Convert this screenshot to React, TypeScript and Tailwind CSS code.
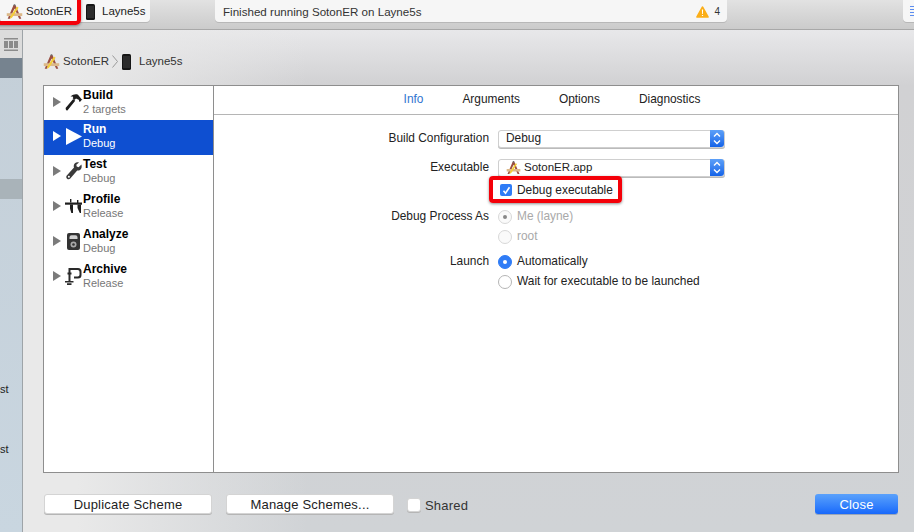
import type { ReactNode } from 'react';

// ─── Icons ─────────────────────────────────────────
function AppIcon({ size = 17 }: Readonly<{ size?: number }>) {
  return (
    <svg width={size} height={size} viewBox="0 0 18 18" className="shrink-0">
      <path d="M1.800 16.800 8 2h2l6.200 14.800h-2.300L9 5.800 4.100 16.800z" fill="#9a4f42" />
      <path d="M.8 10.800h16.400v3H.8z" fill="#dcb98a" />
      <path d="M4.600 14.400 11.600 3.800l1.700 1.100-7 10.600-2.100 1.200z" fill="#f4cd38" />
      <path d="M8.300 1.200h1.400l.5 1.700H7.900z" fill="#6b6b6b" />
    </svg>
  );
}

function PhoneIcon() {
  return (
    <svg width="9" height="16" viewBox="0 0 9 16" className="shrink-0">
      <rect x="0" y="0" width="9" height="16" rx="1.600" fill="#161616" />
      <rect x="1" y="2" width="7" height="12" fill="#2c2c2c" />
    </svg>
  );
}

function HammerIcon() {
  return (
    <svg width="18" height="18" viewBox="0 0 18 18">
      <path d="M.6 14.900 8.200 5.900l2 1.800L2.800 16.900a1.200 1.200 0 0 1-1.800.1z" fill="#1d1d1d" />
      <path d="M5.500 3.600C8 1.300 11 .9 13 1.800l3.600 4.400.9-.3-2.600 3-1-.9.2-1.100L11 5.400 9.600 7 7.700 5.300l.6-1.200C7.600 3.600 6.600 3.500 5.500 3.600z" fill="#1d1d1d" />
    </svg>
  );
}

function PlayIcon() {
  return (
    <svg width="16" height="17" viewBox="0 0 16 17">
      <path d="M0 0 16 8.500 0 17z" fill="#fff" />
    </svg>
  );
}

function WrenchIcon() {
  return (
    <svg width="16" height="18" viewBox="0 0 16 18">
      <path d="M15.400 2.600 12.600 5.200 10.700 4.600 10.300 2.700 13 .4C10.400-.5 7.800 1.200 7.700 4c0 .7.100 1.100.3 1.600L1 13.300c-1.100 1.200-.9 2.700.1 3.500 1 .8 2.300.7 3.200-.3l6.900-8.100c.6.100 1.100.1 1.700 0 2.300-.6 3.300-3.100 2.500-5.800z" fill="#3a3a3a" />
      <circle cx="2.900" cy="14.800" r="1" fill="#fff" />
    </svg>
  );
}

function CaliperIcon() {
  return (
    <svg width="17" height="14" viewBox="0 0 17 14">
      <path d="M0 3.500h17v2.200H0z" fill="#1e1e1e" />
      <path d="M5 0h1.400v3.600H5zM12 1h1.400v3H12z" fill="#1e1e1e" />
      <path d="M5 5.500h3V14H6.300L5 9.500zM12.500 5.500h3.500L16 14h-1.200l-2.300-5z" fill="#1e1e1e" />
    </svg>
  );
}

function AnalyzeIcon() {
  return (
    <svg width="13" height="17" viewBox="0 0 13 17">
      <rect x="0" y="0" width="13" height="17" rx="2" fill="#333" />
      <path d="M2.500 6V4.200a2 2 0 0 1 2-2h4a2 2 0 0 1 2 2V6z" fill="#cfcfcf" />
      <circle cx="6.500" cy="11.500" r="3" fill="#a8a8a8" />
      <circle cx="6.500" cy="11.500" r="1.300" fill="#333" />
    </svg>
  );
}

function ClampIcon() {
  return (
    <svg width="17" height="18" viewBox="0 0 17 18">
      <path d="M3.500 1h9.500A3.500 3.500 0 0 1 16.500 4.500v3.500a3.500 3.500 0 0 1-3.500 3.500H9v-2h3.700A1.800 1.800 0 0 0 14.500 7.700V4.800A1.800 1.800 0 0 0 12.700 3H5.500v3h-2z" fill="#2a2a2a" />
      <path d="M2.500 5.500h4v2h-1v7h-2v-7h-1zM0 14h8.500v1.600H0zM2 16.200h4.500V18H2z" fill="#2a2a2a" />
    </svg>
  );
}

function WarningIcon() {
  return (
    <svg width="13" height="12" viewBox="0 0 13 12">
      <path d="M6.500.3c.4 0 .7.200.9.600l5.300 9.500c.3.600-.1 1.300-.8 1.300H1.100c-.7 0-1.100-.7-.8-1.300L5.600.9c.2-.4.500-.6.900-.6z" fill="#fbae17" />
      <path d="M5.900 3.500h1.200l-.2 4.500h-.8zM5.900 8.900h1.200v1.200H5.900z" fill="#fff" />
    </svg>
  );
}

function Disclosure({ active = false }: Readonly<{ active?: boolean }>) {
  return (
    <svg width="8" height="10" viewBox="0 0 8 10" className="shrink-0">
      <path d="M0 0 8 5 0 10z" fill={active ? '#fff' : '#7b7b7b'} />
    </svg>
  );
}

function Stepper() {
  return (
    <span className="flex h-[17px] w-[14px] shrink-0 items-center justify-center rounded-r-[3px] bg-gradient-to-b from-[#5da0f8] to-[#1463e8]">
      <svg width="8" height="13" viewBox="0 0 8 13" fill="none" stroke="#fff" strokeWidth="1.400">
        <path d="M1 4.500 4 1.500l3 3M1 8.500l3 3 3-3" />
      </svg>
    </span>
  );
}

// ─── Scheme list ───────────────────────────────────
const actions = [
  { name: 'Build', sub: '2 targets', icon: <HammerIcon />, rowClass: 'h-[34px] pb-[2px]' },
  { name: 'Run', sub: 'Debug', icon: <PlayIcon />, rowClass: 'h-[35px] pb-[3px]', active: true },
  { name: 'Test', sub: 'Debug', icon: <WrenchIcon />, rowClass: 'h-[35px] pb-[3px]' },
  { name: 'Profile', sub: 'Release', icon: <CaliperIcon />, rowClass: 'h-[35px] pb-[3px]' },
  { name: 'Analyze', sub: 'Debug', icon: <AnalyzeIcon />, rowClass: 'h-[35px] pb-[3px]' },
  { name: 'Archive', sub: 'Release', icon: <ClampIcon />, rowClass: 'h-[35px] pb-[3px]' },
];

function ActionRow({ name, sub, icon, rowClass, active = false }: Readonly<{ name: string; sub: string; icon: ReactNode; rowClass: string; active?: boolean }>) {
  return (
    <div className={`flex items-center pl-[9px] ${rowClass} ${active ? 'bg-[#0e4fd1]' : ''}`}>
      <Disclosure active={active} />
      <span className="flex w-[22px] shrink-0 items-center justify-center pl-[3px]">{icon}</span>
      <div>
        <div className={`text-[12px] leading-[14px] font-bold ${active ? 'text-white' : 'text-black'}`}>{name}</div>
        <div className={`text-[11px] leading-[14px] ${active ? 'text-white' : 'text-[#777]'}`}>{sub}</div>
      </div>
    </div>
  );
}

// ─── Form bits ─────────────────────────────────────
function FormRow({ label, rowClass, children }: Readonly<{ label?: string; rowClass: string; children: ReactNode }>) {
  return (
    <div className={`flex items-center ${rowClass}`}>
      <span className="w-[275px] shrink-0 text-right text-[11.9px] text-[#222]">{label}</span>
      <div className="flex flex-1 items-center pl-[9px]">{children}</div>
    </div>
  );
}

function Select({ children }: Readonly<{ children: ReactNode }>) {
  return (
    <div className="flex h-[18px] w-[227px] items-center justify-between rounded-[3px] border border-[#cfcfcf] bg-white pl-[7px] text-[11.9px] text-[#222] shadow-[0_1px_0_#bbb]">
      <span className="flex items-center gap-[3px]">{children}</span>
      <Stepper />
    </div>
  );
}

function Radio({ label, checked = false, disabled = false }: Readonly<{ label: string; checked?: boolean; disabled?: boolean }>) {
  const circle = checked && !disabled
    ? 'bg-[#2f7cf6] border-[#2f7cf6]'
    : disabled
      ? 'bg-[#fafafa] border-[#d8d8d8]'
      : 'bg-white border-[#b5b5b5]';
  return (
    <div className="flex items-center gap-[5px]">
      <span className={`flex h-[14px] w-[14px] items-center justify-center rounded-full border ${circle}`}>
        {checked && <span className={`h-[4px] w-[4px] rounded-full ${disabled ? 'bg-[#888]' : 'bg-white'}`} />}
      </span>
      <span className={`text-[11.9px] ${disabled ? 'text-[#a9a9a9]' : 'text-[#222]'}`}>{label}</span>
    </div>
  );
}

function FooterButton({ children, widthClass }: Readonly<{ children: ReactNode; widthClass: string }>) {
  return (
    <button className={`h-[20px] rounded-[3px] border border-[#d4d4d4] bg-white text-[13px] leading-none tracking-[0.2px] text-[#222] shadow-[0_1px_0_#b5b5b5] ${widthClass}`}>
      {children}
    </button>
  );
}

// ─── Page ──────────────────────────────────────────
export default function App() {
  return (
    <div className="flex h-[532px] w-[914px] flex-col overflow-hidden bg-[#d0d3d6] font-['Liberation_Sans',Arial,sans-serif]">
      {/* Toolbar */}
      <div className="relative flex h-[30px] shrink-0 items-start border-b border-b-[#a8a8a8] bg-gradient-to-b from-[#e2e2e2] to-[#cbcbcb]">
        <div className="flex h-[22px] w-[150px] items-center rounded-b-[4px] bg-[#f6f6f6] pl-[6px] pt-px text-[11.5px] text-[#222] shadow-[0_1px_0_#b8b8b8]">
          <AppIcon />
          <span className="ml-[3px] w-[57px]">SotonER</span>
          <span className="ml-[3px]"><PhoneIcon /></span>
          <span className="ml-[7px]">Layne5s</span>
        </div>
        <div className="ml-[65px] flex h-[22px] w-[512px] items-center justify-between rounded-b-[4px] bg-[#f6f6f6] pl-[8px] pr-[7px] pt-px text-[11.6px] text-[#333] shadow-[0_1px_0_#b8b8b8]">
          <span>Finished running SotonER on Layne5s</span>
          <span className="flex items-center gap-[5px] text-[10px]"><WarningIcon />4</span>
        </div>
        <div className="ml-[176px] flex h-[22px] w-[11px] flex-col justify-center gap-[2px] rounded-bl-[4px] bg-[#f6f6f6] pl-[7px] shadow-[0_1px_0_#b8b8b8]">
          <span className="h-px bg-[#5c8df0]" />
          <span className="h-px bg-[#5c8df0]" />
          <span className="h-px bg-[#5c8df0]" />
          <span className="h-px bg-[#5c8df0]" />
        </div>
        {/* red annotation */}
        <div className="absolute left-[-6px] top-[-6px] h-[31px] w-[87px] rounded-[5px] border-[4px] border-[#f40009] shadow-[0_1px_3px_rgba(0,0,0,0.4)]" />
      </div>

      <div className="flex min-h-0 flex-1">
        {/* Navigator sliver */}
        <div className="flex w-[23px] shrink-0 flex-col border-r border-r-[#9ea4a8] bg-gradient-to-b from-[#c4cfd8] to-[#c9d6e0] text-[11px] text-[#222]">
          <div className="flex h-[28px] items-center justify-center bg-[#dcdcdc]">
            <svg width="14" height="13" viewBox="0 0 14 13" fill="#8b8b8b">
              <path d="M0 0h14v1.500H0zM0 3h4v7H0zM5 3h4v7H5zM10 3h4v7h-4zM0 11.500h14V13H0z" />
            </svg>
          </div>
          <div className="h-[20px] bg-[#76838f]" />
          <div className="mt-[101px] h-[20px] bg-[#a9b3b9]" />
          <div className="mt-[183px] h-[14px] leading-[14px]">st</div>
          <div className="mt-[46px] h-[14px] leading-[14px]">st</div>
        </div>

        {/* Scheme sheet */}
        <div className="flex min-w-0 flex-1 flex-col bg-[linear-gradient(90deg,#e9e9e9_0,#e9e9e9_6%,transparent_32%),linear-gradient(180deg,#e8e8ea_0,#d1d1d3_11%,#d0d3d6_100%)] pl-[20px] pr-[15px]">
          <div className="flex h-[55px] shrink-0 items-center pt-[8px] text-[11.5px] text-[#333]">
            <AppIcon />
            <span className="ml-[3px]">SotonER</span>
            <svg width="6" height="13" viewBox="0 0 6 13" fill="none" stroke="#9a9a9a" className="ml-[3px]">
              <path d="m.5.500 5 6-5 6" />
            </svg>
            <span className="ml-[4px]"><PhoneIcon /></span>
            <span className="ml-[8px]">Layne5s</span>
          </div>

          <div className="flex h-[388px] shrink-0 border border-[#8e8e8e] bg-white">
            <div className="w-[170px] shrink-0 border-r border-r-[#8e8e8e]">
              {actions.map(action => (
                <ActionRow key={action.name} {...action} />
              ))}
            </div>

            <div className="min-w-0 flex-1">
              <div className="flex h-[29px] items-center justify-center gap-[39px] border-b border-b-[#b5b5b5] pr-[8px] text-[11.9px] text-[#222]">
                <span className="text-[#2f74d0]">Info</span>
                <span>Arguments</span>
                <span>Options</span>
                <span>Diagnostics</span>
              </div>

              <div className="pt-[14px]">
                <FormRow label="Build Configuration" rowClass="h-[19px] mb-[10px]">
                  <Select>Debug</Select>
                </FormRow>
                <FormRow label="Executable" rowClass="h-[19px]">
                  <Select><AppIcon size={15} /><span className="text-[11.5px]">SotonER.app</span></Select>
                </FormRow>
                <FormRow rowClass="h-[27px]">
                  <div className="relative flex items-center gap-[5px] pl-[2px] text-[11.9px] text-[#222]">
                    <span className="flex h-[12px] w-[12px] items-center justify-center rounded-[2px] bg-[#2f7cf6]">
                      <svg width="9" height="9" viewBox="0 0 9 9" fill="none" stroke="#fff" strokeWidth="1.600">
                        <path d="m1.500 4.800 2 2.400 4-6" />
                      </svg>
                    </span>
                    Debug executable
                    {/* red annotation */}
                    <div className="absolute left-[-9px] top-[-6px] h-[27px] w-[133px] rounded-[4px] border-[4px] border-[#f40009] shadow-[0_1px_3px_rgba(0,0,0,0.45)]" />
                  </div>
                </FormRow>
                <FormRow label="Debug Process As" rowClass="h-[20px] mt-[3px]">
                  <Radio label="Me (layne)" checked disabled />
                </FormRow>
                <FormRow rowClass="h-[20px]">
                  <Radio label="root" disabled />
                </FormRow>
                <FormRow label="Launch" rowClass="h-[20px] mt-[5px]">
                  <Radio label="Automatically" checked />
                </FormRow>
                <FormRow rowClass="h-[20px]">
                  <Radio label="Wait for executable to be launched" />
                </FormRow>
              </div>
            </div>
          </div>

          <div className="flex items-center pt-[20px]">
            <FooterButton widthClass="ml-px w-[168px]">Duplicate Scheme</FooterButton>
            <FooterButton widthClass="ml-[14px] w-[168px]">Manage Schemes...</FooterButton>
            <span className="ml-[13px] mt-[2px] h-[14px] w-[14px] rounded-[3px] border border-[#d4d4d4] bg-white shadow-[0_1px_0_#b5b5b5]" />
            <span className="ml-[4px] mt-[3px] text-[13px] tracking-[0.2px] text-[#333]">Shared</span>
            <button className="ml-auto mr-px h-[20px] w-[83px] rounded-[3px] bg-gradient-to-b from-[#5aa1fb] to-[#1768fb] text-[13px] leading-none tracking-[0.2px] text-white shadow-[0_1px_0_#9aa6b8]">
              Close
            </button>
          </div>
        </div>
      </div>
    </div>
  );
}
